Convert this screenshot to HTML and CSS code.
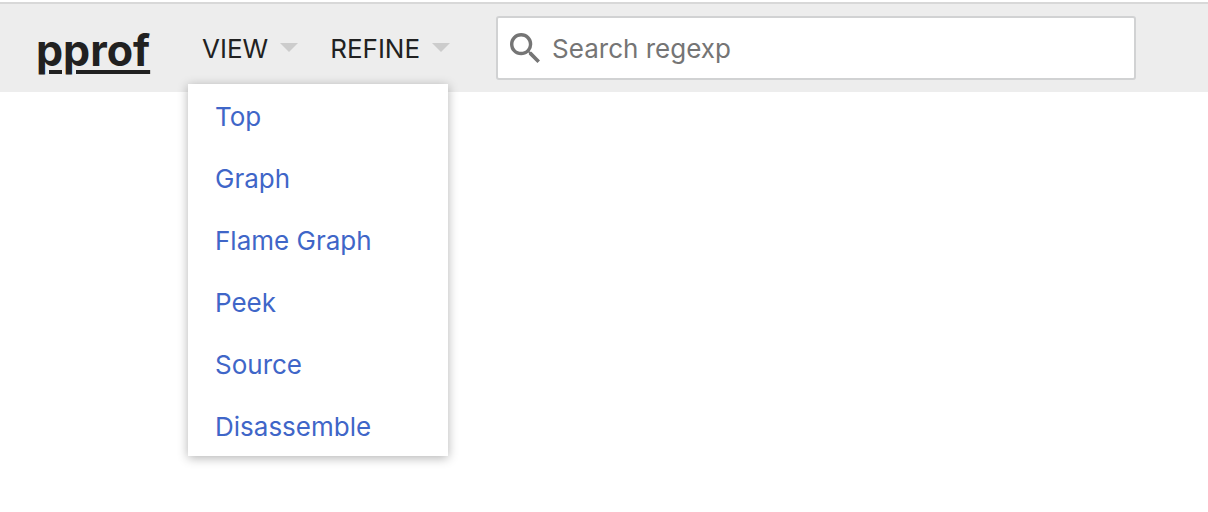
FILE: index.html
```html
<!DOCTYPE html>
<html lang="en">
<head>
<meta charset="utf-8">
<title>pprof</title>
<link rel="stylesheet" href="styles.css">
</head>
<body>
<header class="header">
  <h1 class="brand"><a class="brand-link" href="#">pprof</a></h1>
  <nav class="menus">
    <div class="menu">
      <button class="menu-name" type="button" aria-expanded="true" aria-controls="view-menu">VIEW<span class="arrow"></span></button>
      <div class="submenu" id="view-menu">
        <a class="submenu-item" href="#">Top</a>
        <a class="submenu-item" href="#">Graph</a>
        <a class="submenu-item" href="#">Flame Graph</a>
        <a class="submenu-item" href="#">Peek</a>
        <a class="submenu-item" href="#">Source</a>
        <a class="submenu-item" href="#">Disassemble</a>
      </div>
    </div>
    <div class="menu">
      <button class="menu-name" type="button" aria-expanded="false">REFINE<span class="arrow"></span></button>
    </div>
  </nav>
  <label class="search">
    <svg class="search-icon" viewBox="3 3 17.5 17.5" aria-hidden="true"><path fill="currentColor" d="M15.5 14h-.79l-.28-.27A6.471 6.471 0 0 0 16 9.5 6.5 6.5 0 1 0 9.5 16c1.61 0 3.09-.59 4.23-1.57l.27.28v.79l5 4.99L20.49 19l-4.99-5zm-6 0C7.01 14 5 11.99 5 9.5S7.01 5 9.5 5 14 7.01 14 9.5 11.99 14 9.5 14z"/></svg>
    <input class="search-input" type="text" placeholder="Search regexp" aria-label="Search regexp">
  </label>
</header>
</body>
</html>
```

FILE: styles.css
```css
* {
  box-sizing: border-box;
}

body {
  min-height: 100vh;
  margin: 0;
  padding-top: 2px;
  background: #fff;
  color: #212121;
  font-family: Inter, Roboto, sans-serif;
  font-size: 26px;
  line-height: 32px;
}

.header {
  display: flex;
  align-items: center;
  padding: 12px 72px 12px 36px;
  border-top: 2px solid #d8d8d8;
  background: #ededed;
}

.brand {
  margin: 0;
  padding-top: 4px;
  width: 152px;
  font-size: 43px;
  line-height: 56px;
  font-weight: 700;
}

.brand-link {
  color: #212121;
  text-decoration: underline;
  text-decoration-thickness: 4px;
  text-underline-offset: 4px;
}

.menus {
  display: flex;
  align-items: center;
}

.menu {
  position: relative;
}

.menu-name {
  display: flex;
  align-items: center;
  gap: 12px;
  padding: 17px 18px 15px 14px;
  border: 0;
  background: none;
  color: #212121;
  font: inherit;
  cursor: pointer;
}

.arrow {
  border: 9px solid transparent;
  border-top-color: #ccc;
  border-bottom-width: 0;
  margin-bottom: 4px;
}

.submenu {
  position: absolute;
  top: calc(100% + 4px);
  left: 0;
  z-index: 1;
  min-width: 260px;
  background: #fff;
  box-shadow: 0 2px 10px rgba(0, 0, 0, 0.3);
}

.submenu-item {
  display: block;
  padding: 17px 27px 13px;
  color: #3f66c8;
  text-decoration: none;
  white-space: nowrap;
}

.search {
  display: flex;
  flex: 1;
  align-items: center;
  gap: 12px;
  margin-left: 28px;
  padding: 0 12px;
  border: 2px solid #d1d2d3;
  border-radius: 3px;
  background: #fff;
}

.search-icon {
  flex: none;
  width: 30px;
  height: 30px;
  color: #757575;
}

.search-input {
  flex: 1;
  min-width: 0;
  height: 60px;
  padding: 0;
  border: 0;
  outline: 0;
  background: none;
  font: inherit;
}

.search-input::placeholder {
  color: #757575;
}
```
